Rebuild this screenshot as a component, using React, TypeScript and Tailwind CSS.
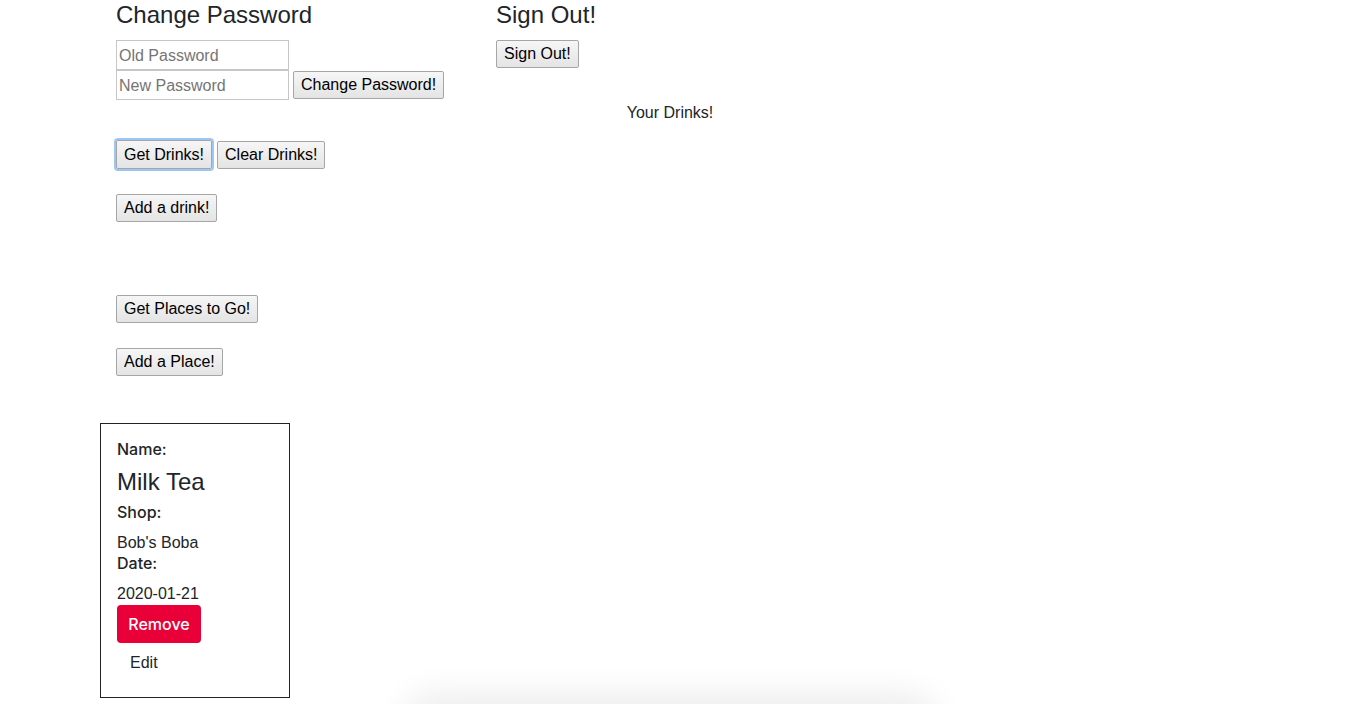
import React from "react";

const btn =
  "h-[28px] px-[7px] border border-[#a6a6a6] rounded-[2px] bg-gradient-to-b from-[#f6f6f6] to-[#e4e4e4] text-[16px] leading-[20px] text-black";

const label = "text-[16px] leading-[20px] font-medium";
const inter = { fontFamily: 'Inter, "Liberation Sans", sans-serif' };

export default function App() {
  return (
    <div
      className="relative h-[704px] w-full overflow-hidden bg-white text-[#212529]"
      style={{ fontFamily: '"Liberation Sans", Arial, sans-serif' }}
    >
      <div className="pl-[116px]">
        <div className="flex">
          <div className="w-[380px]">
            <h3 className="text-[24px] leading-[29px] font-normal mb-[11px]">Change Password</h3>
            <input
              placeholder="Old Password"
              className="block w-[173px] h-[30px] border border-[#c6c6c6] px-[2px] pt-[1px] text-[16px] placeholder:text-[#757575] outline-none"
            />
            <div className="flex items-end">
              <input
                placeholder="New Password"
                className="block w-[173px] h-[30px] border border-[#c6c6c6] px-[2px] pt-[1px] text-[16px] placeholder:text-[#757575] outline-none"
              />
              <button className={btn + " ml-[4px] mb-[1px]"}>Change Password!</button>
            </div>
          </div>
          <div>
            <h3 className="text-[24px] leading-[29px] font-normal mb-[11px]">Sign Out!</h3>
            <button className={btn}>Sign Out!</button>
          </div>
        </div>
      </div>

      <div className="ml-[100px] w-[1140px] text-center text-[16px] leading-[20px] mt-[3px]">Your Drinks!</div>

      <div className="pl-[116px]">
        <div className="flex items-center mt-[17px] gap-[5px]">
          <button className={btn + " h-[29px] border-[#6aa8f5] shadow-[0_0_0_2px_#9cc6f8]"}>Get Drinks!</button>
          <button className={btn}>Clear Drinks!</button>
        </div>
        <div className="mt-[25px]">
          <button className={btn}>Add a drink!</button>
        </div>
        <div className="mt-[73px]">
          <button className={btn}>Get Places to Go!</button>
        </div>
        <div className="mt-[25px]">
          <button className={btn}>Add a Place!</button>
        </div>
      </div>

      <div className="ml-[100px] mt-[47px] w-[190px] h-[275px] border border-[#222] pl-[16px] pt-[15px]">
        <div className={label} style={inter}>Name:</div>
        <div className="text-[24px] leading-[29px] mt-[8px]">Milk Tea</div>
        <div className={label + " mt-[6px]"} style={inter}>Shop:</div>
        <div className="text-[16px] leading-[20px] mt-[11px]">Bob's Boba</div>
        <div className={label} style={inter}>Date:</div>
        <div className="text-[16px] leading-[20px] mt-[11px]">2020-01-21</div>
        <button
          className="mt-[1px] w-[84px] h-[38px] rounded-[4px] bg-[#ea0039] text-white text-[16px] font-medium"
          style={inter}
        >
          Remove
        </button>
        <div className="text-[16px] leading-[20px] mt-[10px] pl-[13px]">Edit</div>
      </div>

      <div className="absolute left-[415px] top-[706px] w-[510px] h-[40px] rounded-[20px] shadow-[0_0_32px_14px_rgba(0,0,0,0.07)]" />
    </div>
  );
}
